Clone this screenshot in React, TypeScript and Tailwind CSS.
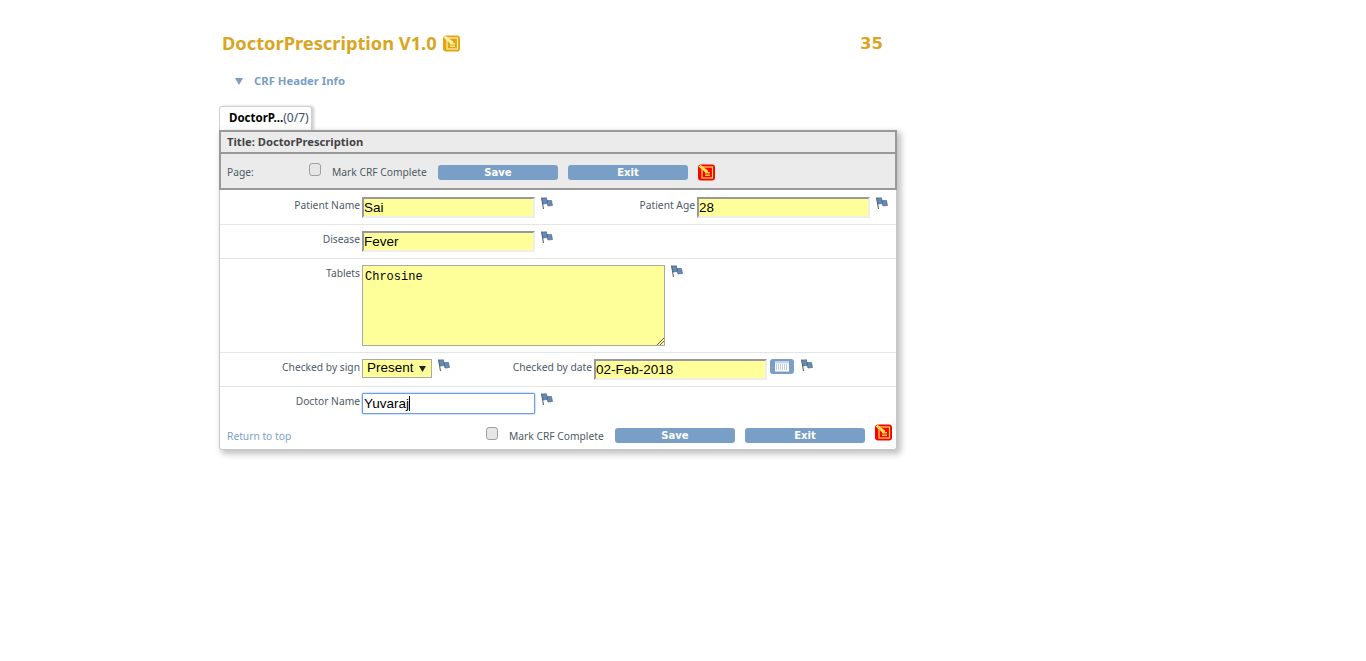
import React from "react";

const font = { fontFamily: '"Liberation Sans", Arial, sans-serif' };
const bold = { fontFamily: '"Noto Sans", sans-serif' };

function Flag() {
  return (
    <svg width="13" height="13" viewBox="0 0 13 13" className="shrink-0 block">
      <path d="M1.5 0.5 L3.5 12" stroke="#55606b" strokeWidth="1.1" fill="none" />
      <path d="M2 1 L6.5 0.8 L7 3.5 L11.5 3.5 L12.5 8.5 L8 9 L7 6.5 L3 7 Z" fill="#668ab2" stroke="#3f5f85" strokeWidth="0.6" />
      <path d="M7 3.5 L7.5 6.5" stroke="#3f5f85" strokeWidth="0.8" />
    </svg>
  );
}

function NoteIcon({ bg, fg, size = 17 }: { bg: string; fg: string; size?: number }) {
  return (
    <svg width={size} height={size} viewBox="0 0 17 17" className="shrink-0 block">
      <rect x="0" y="0.5" width="17" height="16" rx="3" fill={bg} />
      <rect x="4" y="3" width="10.5" height="11" fill="none" stroke={fg} strokeWidth="1.2" />
      <path d="M7 8.5h5M7 10h5M7 11.5h5" stroke={fg} strokeWidth="0.9" />
      <path d="M0.5 2.5 L2.5 0.8 L10.5 7 L8.5 9.5 Z" fill={fg} />
    </svg>
  );
}

function CalIcon() {
  return (
    <svg width="24" height="15" viewBox="0 0 24 15" className="shrink-0 block">
      <rect width="24" height="15" rx="3" fill="#7a9fc7" />
      <rect x="5" y="2.5" width="14" height="10" fill="#fff" />
      <rect x="5" y="2.5" width="14" height="2" fill="#c5d6e8" />
      <path d="M6 6h12M6 8h12M6 10h12" stroke="#7a9fc7" strokeWidth="1" strokeDasharray="1 1" />
    </svg>
  );
}

function Btn({ label }: { label: string }) {
  return (
    <button className="w-[120px] h-[15px] rounded-[3px] bg-[#7a9fc7] text-white text-[10px] leading-[13px] font-bold text-center" style={{ fontFamily: '"DejaVu Sans", sans-serif' }}>
      {label}
    </button>
  );
}

function Check() {
  return <span className="block w-[12px] h-[13px] rounded-[3px] border border-[#a0a0a0] bg-[#e6e6e6] shrink-0" />;
}

function Field({ value }: { value: string }) {
  return (
    <div className="w-[173px] h-[21px] shrink-0 bg-[#ffff99] border-2 border-t-[#999999] border-l-[#999999] border-r-[#eeeeee] border-b-[#eeeeee] text-[13.5px] leading-[18px] text-black" style={font}>
      {value}
    </div>
  );
}

function Label({ children, w }: { children: React.ReactNode; w: string }) {
  return <div className={`${w} shrink-0 text-right pr-[2px] text-[#4d5a66] text-[10.25px] leading-[14px] pt-[1px]`}>{children}</div>;
}

export default function App() {
  return (
    <div className="min-h-[661px] bg-white pl-[219px] pt-[33px]" style={{ fontFamily: '"Noto Sans", sans-serif' }}>
      <div className="w-[664px] flex items-center justify-between pl-[3px] h-[21px]">
        <div className="flex items-center gap-[6px]">
          <span className="text-[#d9a522] font-bold text-[18.25px] leading-[21px] pb-[2px]" style={bold}>DoctorPrescription V1.0</span>
          <NoteIcon bg="#e5a50f" fg="#fff2b0" />
        </div>
        <span className="text-[#d9a522] font-bold text-[16.5px] leading-[21px]" style={{ fontFamily: '"DejaVu Sans", sans-serif' }}>35</span>
      </div>

      <div className="flex items-center h-[14px] mt-[20px] pl-[16px] gap-[11px]">
        <svg width="8" height="7" viewBox="0 0 8 7"><path d="M0 0h8L4 7z" fill="#7a9fc7" /></svg>
        <span className="text-[#7a9fc7] font-bold text-[11.3px]" style={bold}>CRF Header Info</span>
      </div>

      <div className="mt-[18px] w-[93px] h-[24px] pb-[2px] bg-white border border-[#d0d0d0] border-b-0 rounded-t-[3px] shadow-[2px_0_3px_rgba(0,0,0,0.2)] flex items-center pl-[9px]">
        <span className="font-bold text-black text-[11.5px]">DoctorP...</span><span className="text-[#3b4a66] text-[12px]">(0/7)</span>
      </div>

      <div className="w-[678px] h-[320px] bg-white border border-[#c8c8c8] rounded-b-[3px] shadow-[3px_3px_6px_1px_rgba(0,0,0,0.25)]">
        <div className="h-[22px] bg-[#ebebeb] border-2 border-[#999999] border-b-0 -mx-px -mt-px flex items-center pl-[6px] font-bold text-[#444444] text-[11.2px]" style={bold}>
          Title: DoctorPrescription
        </div>
        <div className="h-[38px] bg-[#ebebeb] border-2 border-[#999999] -mx-px flex items-center pl-[6px] text-[#4d5a66] text-[10.25px]">
          <span className="w-[82px] pt-[4px]">Page:</span>
          <span className="-mt-[4px]"><Check /></span>
          <span className="ml-[11px] w-[106px] pt-[4px]">Mark CRF Complete</span>
          <span className="pt-[2px] flex">
            <Btn label="Save" />
            <span className="w-[10px]" />
            <Btn label="Exit" />
          </span>
          <span className="ml-[10px] pt-[2px]"><NoteIcon bg="#ff0000" fg="#ffe24d" /></span>
        </div>

        <div className="h-[35px] border-b border-[#e5e5e5] flex items-start pt-[7px]">
          <Label w="w-[142px]">Patient Name</Label>
          <Field value="Sai" />
          <span className="ml-[5px]"><Flag /></span>
          <Label w="w-[144px]">Patient Age</Label>
          <Field value="28" />
          <span className="ml-[5px]"><Flag /></span>
        </div>
        <div className="h-[34px] border-b border-[#e5e5e5] flex items-start pt-[6px]">
          <Label w="w-[142px]">Disease</Label>
          <Field value="Fever" />
          <span className="ml-[5px]"><Flag /></span>
        </div>
        <div className="h-[94px] border-b border-[#e5e5e5] flex items-start pt-[6px]">
          <Label w="w-[142px]">Tablets</Label>
          <div className="relative w-[303px] h-[81px] bg-[#ffff99] border border-[#a9a9a9] pl-[2px] pt-[3px] text-[12px] leading-[16px] text-black" style={{ fontFamily: '"Liberation Mono", monospace' }}>
            Chrosine
            <svg width="8" height="8" viewBox="0 0 8 8" className="absolute right-0 bottom-0"><path d="M1 8L8 1M4 8L8 4" stroke="#555" strokeWidth="1" /></svg>
          </div>
          <span className="ml-[5px]"><Flag /></span>
        </div>
        <div className="h-[34px] border-b border-[#e5e5e5] flex items-start pt-[6px]">
          <Label w="w-[142px]">Checked by sign</Label>
          <div className="w-[70px] h-[19px] shrink-0 bg-[#ffff99] border border-[#a9a9a9] flex items-center pl-[4px] gap-[5px] text-[13.5px] text-black" style={font}>
            Present
            <svg width="7" height="6" viewBox="0 0 7 6"><path d="M0 0h7L3.5 6z" fill="#222" /></svg>
          </div>
          <span className="ml-[5px]"><Flag /></span>
          <Label w="w-[144px]">Checked by date</Label>
          <Field value="02-Feb-2018" />
          <span className="ml-[3px]"><CalIcon /></span>
          <span className="ml-[6px]"><Flag /></span>
        </div>
        <div className="h-[34px] flex items-start pt-[6px]">
          <Label w="w-[142px]">Doctor Name</Label>
          <div className="w-[173px] h-[21px] shrink-0 bg-white border border-[#6f9be0] shadow-[0_0_2px_#6f9be0] rounded-[1px] pl-[1px] text-[13.5px] leading-[19px] text-black flex items-center" style={font}>
            Yuvaraj<span className="w-px h-[15px] bg-black" />
          </div>
          <span className="ml-[5px]"><Flag /></span>
        </div>
        <div className="h-[28px] flex items-start pl-[7px] pt-[2px] text-[10.25px]">
          <span className="w-[259px] text-[#7a9fc7] pt-[6px]">Return to top</span>
          <span className="mt-[4px]"><Check /></span>
          <span className="ml-[11px] w-[106px] text-[#4d5a66] pt-[6px]">Mark CRF Complete</span>
          <span className="pt-[5px] flex">
            <Btn label="Save" />
            <span className="w-[10px]" />
            <Btn label="Exit" />
          </span>
          <span className="ml-[10px] pt-[1px]"><NoteIcon bg="#ff0000" fg="#ffe24d" /></span>
        </div>
      </div>
    </div>
  );
}
